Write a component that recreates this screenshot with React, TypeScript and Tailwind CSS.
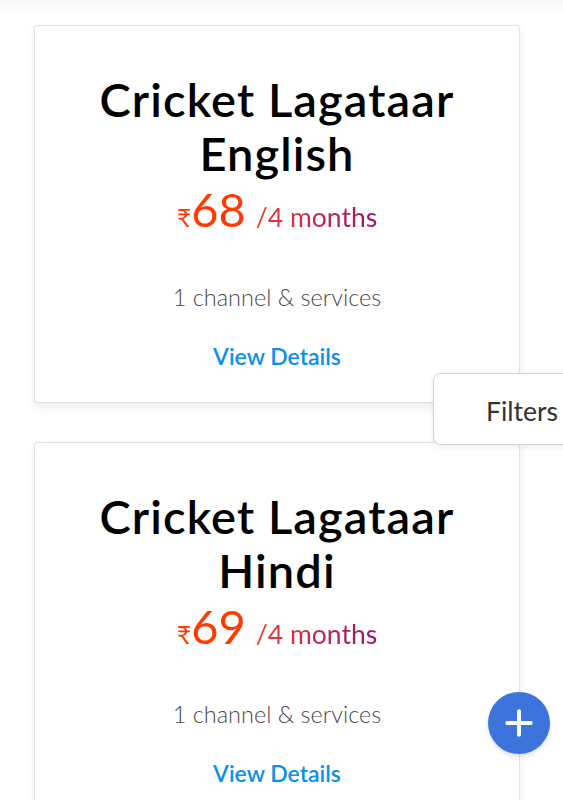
import { Plus } from 'lucide-react'

interface Pack {
  readonly title: string[]
  readonly price: string
  readonly period: string
  readonly channels: string
}

const packs: Pack[] = [
  { title: ['Cricket Lagataar', 'English'], price: '68', period: '/4 months', channels: '1 channel & services' },
  { title: ['Cricket Lagataar', 'Hindi'], price: '69', period: '/4 months', channels: '1 channel & services' },
]

function PackCard({ pack }: { readonly pack: Pack }) {
  return (
    <div className="ml-[34px] w-[486px] h-[378px] shrink-0 bg-white border border-[#e2e2e2] rounded-[3px] shadow-[0_4px_10px_rgba(0,0,0,0.07)] flex flex-col items-center pt-[46px]">
      {/* Title */}
      <h2 className="text-[47px] leading-[54px] font-semibold text-black text-center tracking-[1.1px]">
        {pack.title.map((line) => (
          <span key={line} className="block">{line}</span>
        ))}
      </h2>

      {/* Price */}
      <div className="flex items-baseline h-[64px] mt-[6px] bg-gradient-to-r from-[#ff3a00] from-30% to-[#9c1066] bg-clip-text text-transparent">
        <span className="text-[25px] leading-none">₹</span>
        <span className="text-[47px] leading-none">{pack.price}</span>
        <span className="text-[26.5px] leading-none ml-[10px]">{pack.period}</span>
      </div>

      <p className="mt-[32px] text-[23.5px] leading-[30px] text-[#4a4a4a] font-light">{pack.channels}</p>

      <button className="mt-[29px] text-[23px] leading-[30px] font-semibold text-[#0a90ea]">View Details</button>
    </div>
  )
}

export default function App() {
  return (
    <div className="relative w-[563px] h-[800px] overflow-hidden bg-white font-['Lato',sans-serif]">
      {/* previous card shadow peeking from the top */}
      <div className="h-[25px] bg-gradient-to-b from-[#f7f7f7] to-white to-60%" />

      <div className="flex flex-col gap-[39px]">
        {packs.map((pack) => (
          <PackCard key={pack.price} pack={pack} />
        ))}
      </div>

      {/* Filters tab */}
      <div className="absolute left-[433px] top-[373px] w-[160px] h-[72px] bg-white border border-[#d4d4d4] rounded-[8px] shadow-[0_2px_6px_rgba(0,0,0,0.08)] flex items-center pl-[52px] pt-[6px]">
        <span className="text-[26.5px] text-[#333] font-normal">Filters</span>
      </div>

      {/* Floating add button */}
      <button className="absolute left-[488px] top-[692px] w-[62px] h-[62px] rounded-full bg-[#3d74dc] flex items-center justify-center shadow-[0_2px_4px_rgba(0,0,0,0.15)]">
        <Plus className="w-[40px] h-[40px] text-white" strokeWidth={2.4} />
      </button>
    </div>
  )
}
